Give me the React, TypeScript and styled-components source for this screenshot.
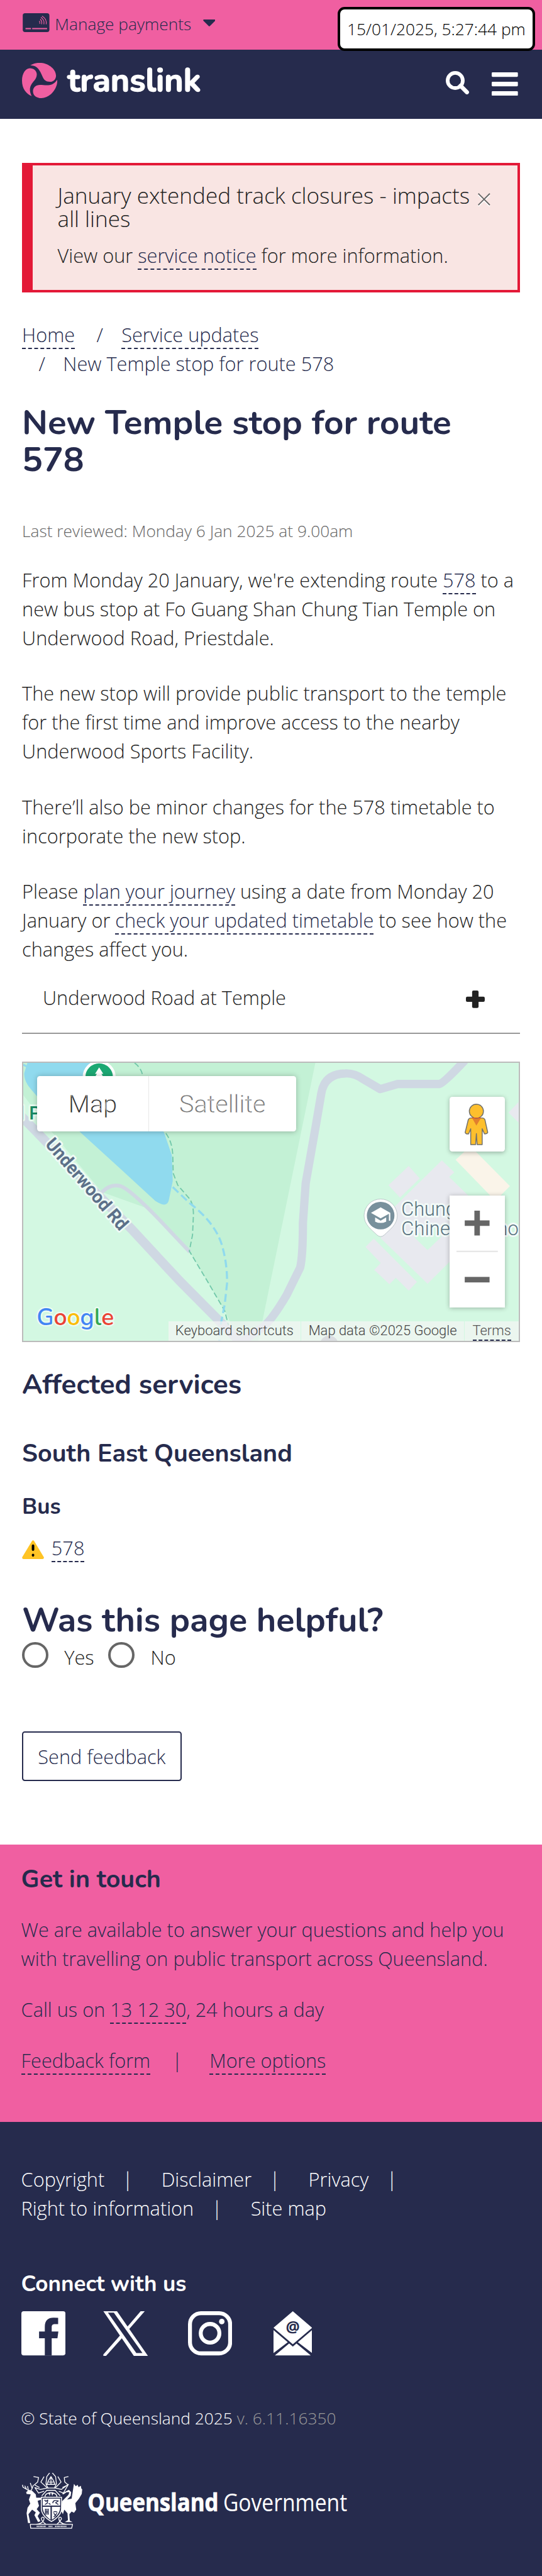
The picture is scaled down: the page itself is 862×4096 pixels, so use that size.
import React from "react";
import styled, { createGlobalStyle } from "styled-components";

/* Sizes are written in design units: the page is 1179 units wide. */
const u = (n: number) => `${(n * 0.73095).toFixed(2)}px`;

const navy = "#262b4d";
const pink = "#f05fa1";
const bodyFont = `"Open Sans", "Noto Sans", sans-serif`;
const headFont = `Nunito, "Open Sans", sans-serif`;
const mapFont = `Roboto, "Liberation Sans", sans-serif`;

const GlobalStyle = createGlobalStyle`
  *, *::before, *::after { box-sizing: border-box; }
  html, body { margin: 0; padding: 0; background: #fff; }
  body {
    font-family: ${bodyFont};
    font-weight: 300;
    font-size: ${u(42)};
    line-height: ${u(63)};
    color: #222;
    overflow: hidden;
  }
  svg { display: block; flex: none; }
  h1, h2, h3, h4, p { margin: 0; }
`;

const Page = styled.div`
  position: relative;
  width: 100%;
  height: 4096px;
  overflow: hidden;
  white-space: nowrap;
`;

const TopBar = styled.div`
  display: flex;
  height: ${u(108)};
  padding: 0 0 ${u(4)} ${u(49)};
  align-items: center;
  background: ${pink};
  color: ${navy};
  font-size: ${u(36)};
`;

const CardIcon = styled.svg`
  width: ${u(58.5)};
  height: ${u(41)};
  margin: 0 ${u(12)} ${u(5)} 0;
`;

const Caret = styled.svg`
  width: ${u(27)};
  height: ${u(15)};
  margin: 0 0 ${u(5)} ${u(25)};
`;

const Timestamp = styled.div`
  position: absolute;
  top: ${u(15)};
  right: ${u(15)};
  width: ${u(430)};
  height: ${u(96)};
  display: flex;
  align-items: center;
  justify-content: center;
  background: #fff;
  border: ${u(6)} solid #000;
  border-radius: ${u(15)};
  color: #000;
  font-size: ${u(36)};
`;

const NavBar = styled.header`
  display: flex;
  align-items: center;
  height: ${u(150)};
  padding: 0 ${u(52)} ${u(15)} ${u(48)};
  background: ${navy};
`;

const Brand = styled.div`
  margin: 0 auto 0 ${u(22)};
  color: #fff;
  font-family: ${headFont};
  font-weight: 700;
  font-size: ${u(71)};
  line-height: ${u(92)};
  -webkit-text-stroke: ${u(2)} #fff;
`;

const NavIcon = styled.svg<{ $w: number; $drop: number; $gap?: number }>`
  width: ${(p) => u(p.$w)};
  height: ${u(51)};
  margin-top: ${(p) => u(p.$drop * 2)};
  margin-left: ${(p) => u(p.$gap ?? 0)};
`;

const Main = styled.main`
  padding: ${u(96)} ${u(48)} ${u(138)};
`;

const Alert = styled.section`
  display: flex;
  justify-content: space-between;
  height: ${u(282)};
  padding: ${u(40)} ${u(59)} 0 ${u(54)};
  background: #f9e5e3;
  border: ${u(6)} solid #e31937;
  border-left-width: ${u(24)};
`;

const AlertTitle = styled.p`
  margin-bottom: ${u(23)};
  font-size: ${u(48)};
  line-height: ${u(51)};
`;

const CloseIcon = styled.svg`
  width: ${u(27)};
  height: ${u(30)};
  margin-top: ${u(20)};
`;

const Link = styled.a`
  color: ${navy};
  border-bottom: ${u(3)} dashed ${navy};
`;

const Crumbs = styled.nav`
  margin-top: ${u(60)};
  color: ${navy};
`;

const Sep = styled.span<{ $before: number; $after: number }>`
  margin-left: ${(p) => u(p.$before)};
  margin-right: ${(p) => u(p.$after)};
`;

const Heading = styled.h2<{ $size: number; $top: number; $bottom?: number; $line?: number; $color?: string }>`
  margin-top: ${(p) => u(p.$top)};
  margin-bottom: ${(p) => u(p.$bottom ?? 0)};
  font-family: ${headFont};
  font-weight: 700;
  font-size: ${(p) => u(p.$size)};
  line-height: ${(p) => u(p.$line ?? 60)};
  color: ${(p) => p.$color ?? navy};
`;

const Reviewed = styled.p`
  margin: ${u(87.2)} 0 ${u(47)};
  font-size: ${u(36)};
  line-height: ${u(54)};
  color: #666;
`;

const Para = styled.p<{ $gap?: number }>`
  margin-bottom: ${(p) => u(p.$gap ?? 57.7)};
`;

const Accordion = styled.div`
  display: flex;
  justify-content: space-between;
  align-items: center;
  padding: ${u(42)} ${u(76)} ${u(45)} ${u(45)};
  border-bottom: ${u(4)} solid #999;
`;

const PlusIcon = styled.svg`
  width: ${u(41)};
  height: ${u(38)};
  margin-top: ${u(9)};
`;

const MapFrame = styled.div`
  position: relative;
  height: ${u(611)};
  margin-top: ${u(60)};
  border: ${u(3)} solid #bbb;
  overflow: hidden;
  font-family: ${mapFont};
`;

const MapArt = styled.svg`
  width: 100%;
  height: 100%;
`;

const MapTypes = styled.div`
  position: absolute;
  top: ${u(30)};
  left: ${u(30)};
  display: flex;
  height: ${u(120)};
  background: #fff;
  border-radius: ${u(6)};
  box-shadow: 0 ${u(1)} ${u(12)} rgba(0, 0, 0, 0.25);
`;

const MapType = styled.button<{ $w: number; $active?: boolean }>`
  width: ${(p) => u(p.$w)};
  padding: 0;
  border: 0;
  border-left: ${(p) => (p.$active ? "0" : `1px solid #e8e8e8`)};
  background: none;
  font-family: ${mapFont};
  font-weight: 300;
  font-size: ${u(54)};
  color: ${(p) => (p.$active ? "#222" : "#707070")};
  -webkit-text-stroke: 0.35px #fff;
`;

const MapControl = styled.div<{ $top: number; $h: number; $r: number }>`
  position: absolute;
  top: ${(p) => u(p.$top)};
  right: ${u(30)};
  width: ${u(120)};
  height: ${(p) => u(p.$h)};
  background: #fff;
  border-radius: ${(p) => u(p.$r)};
  box-shadow: 0 ${u(2)} ${u(10)} rgba(0, 0, 0, 0.28);
  svg { width: 100%; height: 100%; }
`;

const Attribution = styled.div`
  position: absolute;
  right: 0;
  bottom: 0;
  display: flex;
  gap: ${u(2)};
  height: ${u(42)};
  font-size: ${u(30)};
  line-height: ${u(40)};
  font-weight: 300;
  color: #444;
`;

const Credit = styled.span<{ $w: number }>`
  width: ${(p) => u(p.$w)};
  text-align: center;
  background: rgba(245, 245, 245, 0.7);
`;

const TermsLink = styled.a`
  display: inline-block;
  height: ${u(42)};
  border-bottom: ${u(4)} dashed ${navy};
  color: #555;
`;

const Route = styled.div`
  display: flex;
  align-items: center;
  margin-top: ${u(28)};
  gap: ${u(16)};
`;

const WarnIcon = styled.svg`
  width: ${u(48)};
  height: ${u(41)};
  margin-top: ${u(9)};
`;

const Choices = styled.div`
  display: flex;
  align-items: center;
  height: ${u(57)};
  margin: ${u(6)} 0 ${u(138)};
`;

const Radio = styled.span`
  width: ${u(57)};
  height: ${u(57)};
  border: ${u(6)} solid #666;
  border-radius: 50%;
`;

const Choice = styled.span`
  margin: 0 ${u(31)} 0 ${u(35)};
  padding-top: ${u(11)};
`;

const Button = styled.button`
  display: block;
  width: ${u(347)};
  height: ${u(108)};
  padding: 0;
  border: ${u(3)} solid ${navy};
  border-radius: ${u(6)};
  background: #fff;
  color: ${navy};
  font: 300 ${u(42)} ${bodyFont};
`;

const Contact = styled.section`
  height: ${u(603)};
  padding: ${u(46.5)} ${u(46)} 0;
  background: ${pink};
  color: ${navy};
`;

const Footer = styled.footer`
  height: ${u(990)};
  padding: ${u(94)} ${u(46)} 0;
  background: ${navy};
  color: #fff;
`;

const Social = styled.div`
  display: flex;
  align-items: center;
  height: ${u(97)};
  margin-top: ${u(29)};
`;

const SocialIcon = styled.svg<{ $w: number; $gap: number }>`
  width: ${(p) => u(p.$w)};
  height: ${u(97)};
  margin-right: ${(p) => u(p.$gap)};
`;

const Legal = styled.p`
  margin: ${u(110)} 0 ${u(91)};
  font-size: ${u(36)};
  line-height: ${u(54)};
  span { color: #999; }
`;

const Crest = styled.div`
  display: flex;
  gap: ${u(10)};
  padding-left: ${u(2)};
`;

const Swirl = () => (
  <svg width={u(77)} height={u(77)} viewBox="24 36 232 232" fill={pink}>
    <path d="M78 53C100 38 125 34 150 36C203 41 246 80 247 118C247 140 235 160 206 160C180 160 168 148 158 125C142 88 125 50 78 53Z" />
    <path d="M75 71C101 71 121 88 121 112C121 130 112 144 98 160C72 190 70 218 87 254C52 238 24 205 24 152C24 105 48 71 75 71Z" />
    <path d="M255 146C258 182 240 216 215 240C190 262 165 268 140 267C112 263 96 246 96 222C96 197 115 180 142 180C177 180 222 197 255 146Z" />
  </svg>
);

const MapDrawing = () => (
  <MapArt viewBox="0 0 1077 605" preserveAspectRatio="none" fontFamily="Roboto, sans-serif">
    <rect width="1077" height="605" fill="#d3f8e2" />
    <path d="M0 0H635L511 605H470L438 539L361 409L280 320L171 281L62 150L0 70Z" fill="#c3f1d5" />
    <path d="M9 0L2 23C2 45 18 58 32 75L84 114L122 149L212 231L287 300Q314 318 317 296L325 257L323 201L306 151L272 110L175 0Z" fill="#90daee" />
    <path d="M171 281Q190 262 212 268Q232 275 295 340L362 411" fill="none" stroke="#cfd8e3" strokeWidth="8" />
    <path d="M-10 110L62 184L235 361L340 474L470 605" fill="none" stroke="#cfd8e3" strokeWidth="20" />
    <path d="M470 610L520 575Q540 560 573 504L602 445Q608 420 608 348L614 262L637 131L648 66Q655 24 700 23Q720 22 740 36L776 57L814 46L905 46Q914 44 960 -5" fill="none" stroke="#cfd8e3" strokeWidth="18" strokeLinejoin="round" />
    <g fill="none" stroke="#72c8aa" strokeWidth="2.5" strokeDasharray="12 6">
      <path d="M242 0Q260 14 260 34" />
      <path d="M310 153Q324 172 325 200L326 240L336 266L362 296Q370 308 370 330L368 374L361 409L400 474L438 539L446 570" />
    </g>
    <path d="M325 270L362 305Q420 350 433 400Q444 440 443 480L438 525L430 565L426 605M0 4L8 8" fill="none" stroke="#90daee" strokeWidth="4.5" strokeDasharray="17 8" />
    <g fill="#e8e9ef">
      <path d="M838 224L862 251L819 293L794 266Z" />
      <path fillRule="evenodd" d="M910 212L937 238L926 248L1010 330V350L879 480L777 381L809 311ZM849 378L879 407L909 378L894 350Z" />
      <path d="M762 382L856 476L838 495L810 467L796 481L763 450L777 435L744 400Z" />
      <path d="M1055 108L1077 85V130Z" />
    </g>
    <path d="M940 211L959 193H984L1058 268L1036 290H1017Z" fill="#faf4e9" />
    <circle cx="165" cy="31" r="36" fill="#fff" />
    <circle cx="165" cy="31" r="30" fill="#1ca873" />
    <path d="M165 10L174 24H170L178 38H152L160 24H156Z" fill="#fff" />
    <g stroke="#fff" strokeWidth="8" strokeLinejoin="round" paintOrder="stroke">
      <text x="-8" y="123" fontSize="41" fontWeight="500" fill="#188a64" stroke="#e6fbef">l P</text>
      <text transform="translate(46 178) rotate(49)" fontSize="40" fontWeight="700" fill="#5c7089" stroke="#eefaf5" textLength="250" lengthAdjust="spacingAndGlyphs">Underwood Rd</text>
      <g fontSize="42" fill="#56707d" stroke="#f2faf8">
        <text x="822" y="332">Chung Tian</text>
        <text x="822" y="374" textLength="255">Chinese Scho</text>
      </g>
    </g>
    <path d="M777 296A36 36 0 0 1 813 332C813 352 797 362 785 374Q777 381 769 374C757 362 741 352 741 332A36 36 0 0 1 777 296Z" fill="#fff" stroke="#aab5bb" strokeWidth="1" />
    <circle cx="777" cy="332" r="30" fill="#78909c" />
    <path d="M777 314L798 326V343H795V328L777 338L756 326ZM765 336L777 343L789 336V345Q777 351 765 345Z" fill="#fff" />
    <circle cx="665" cy="613" r="20" fill="#9aa3ad" />
    <text x="29" y="570" fontFamily="Nunito, 'Open Sans', sans-serif" fontSize="51" fontWeight="600" stroke="#fff" strokeOpacity=".6" strokeWidth="6" paintOrder="stroke">
      <tspan fill="#4285f4">G</tspan><tspan fill="#ea4335">o</tspan><tspan fill="#fbbc04">o</tspan><tspan fill="#4285f4">g</tspan><tspan fill="#34a853">l</tspan><tspan fill="#ea4335">e</tspan>
    </text>
  </MapArt>
);

const Pegman = () => (
  <svg viewBox="0 0 360 360" fill="#fdbf2d" stroke="#70706c" strokeWidth="6" strokeLinejoin="round">
    <path d="M140 138H212Q226 138 231 150L249 232Q246 242 228 242L213 208V312H180L175 240L170 312H138V208L124 242Q104 244 102 232L122 150Q127 138 140 138Z" />
    <path d="M148 140H204L175 188Z" fill="#e17f2e" stroke="none" />
    <circle cx="175" cy="94" r="46" />
    <path d="M144 138H206" stroke="#d9542c" strokeWidth="5" />
  </svg>
);

const CoatOfArms = () => (
  <svg width={u(133)} height={u(121)} viewBox="0 0 133 121" fill="#fff" stroke="#fff" strokeLinejoin="round">
    <g fill="none" strokeWidth="1.8">
      <path d="M18 41L10 36L2 31L1 26M10 36L6 28M18 41L22 34L18 22M22 34L25 26M14 38L12 29" />
      <path d="M25 8L36 10L34 20L27 26L38 32M48 8L41 20L50 28L55 33L40 36L28 32L36 44L48 40M101 8L92 10L93 20L100 26L88 32M78 8L85 20L77 28L72 33L86 36L101 25L90 44L80 40" />
      <path d="M60 0L54 8L52 24L57 34M66 0L73 8L75 24L70 34M57 18L63 8L69 18L72 25H54ZM63 10V26M57 20H69" />
      <path d="M53 38H73M56 33H70M54 38L43 50M72 38L83 50M50 52C50 40 76 40 76 52M60 42V49M66 42V49M57 45H62M64 45H69" />
    </g>
    <path strokeWidth="0" d="M9 42L15 37L22 39L30 47L31 54L41 54L42 58L34 61L37 72L32 79L39 87L34 94L40 105L35 107L27 92L30 86L22 80L14 90L18 109L13 109L10 88L12 76L18 67L15 58L19 47L10 46Z" />
    <path strokeWidth="0" d="M113 24L117 29L121 26L123 31L128 28L129 34L131 36L130 46L124 56L116 66L118 80L113 87L108 84L103 90L104 104L110 107H93L100 103L99 88L92 80L89 90L85 82L87 62L101 48L103 42L97 42L90 47L87 45L96 40L102 37L107 42L106 50L98 58L108 56Z" />
    <path d="M42 53H86V75C87 89 78 98 64 106C50 98 41 89 42 75Z" strokeWidth="2" fill="#262b4d" />
    <path d="M45 56H83V71H45ZM45 74H62V102C52 95 45 86 45 74ZM65 74H83C83 86 76 95 65 102Z" strokeWidth="0" />
    <g fill="none" stroke="#262b4d" strokeWidth="2">
      <path d="M49 59L52 62L56 59L55 66L50 69M58 66L62 69M67 66C67 60 72 59 79 61L73 65L79 69M51 78V91M54 78V91M57 78V91M50 85H58M69 88L76 96M76 88L69 96M68 86Q72 82 77 86" />
    </g>
    <path fill="none" strokeWidth="1.8" d="M18 112H110L108 120.5H19ZM30 112Q48 110 48 98Q43 94 42 100Q44 106 52 112M97 112Q80 110 80 98Q85 94 86 100Q83 106 76 112" />
    <path fill="none" strokeWidth="3" strokeDasharray="2 1.2" d="M32 116.5H52M58 116.5H66M72 116.5H97" />
  </svg>
);

const GovWordmark = () => (
  <svg width={u(620)} height={u(121)} viewBox="0 0 620 121" fill="#fff" fontFamily="'Open Sans', sans-serif" fontSize="53">
    <text x="-1" y="84" fontWeight="700" textLength="285" lengthAdjust="spacingAndGlyphs" stroke="#fff" strokeWidth="1">Queensland</text>
    <text x="294" y="84" fontWeight="400" textLength="270" lengthAdjust="spacingAndGlyphs">Government</text>
  </svg>
);

export default function App() {
  return (
    <Page>
      <GlobalStyle />
      <TopBar>
        <CardIcon viewBox="0 0 58 41">
          <rect width="58" height="41" rx="5" fill={navy} />
          <path d="M6 33.5H18M20.500 33.500H53" stroke={pink} strokeWidth="2.600" />
          <path d="M36 17Q38 20 37 23M38 13Q43 18 41 24M39.500 9Q48 15 46 24M42 6Q53 13 51 24" fill="none" stroke={pink} strokeWidth="1.600" />
        </CardIcon>
        Manage payments
        <Caret viewBox="0 0 27 15">
          <path d="M1.500 0H25.500Q28 1 26 3L15 14Q13.500 15.500 12 14L1 3Q-1 1 1.500 0Z" fill={navy} />
        </Caret>
      </TopBar>
      <NavBar>
        <Swirl />
        <Brand>translink</Brand>
        <NavIcon $w={51} $drop={4} viewBox="0 0 51 51">
          <circle cx="20.500" cy="20.500" r="16.500" fill="none" stroke="#fff" strokeWidth="8" />
          <path d="M32 32L46 46" stroke="#fff" strokeWidth="9" strokeLinecap="round" />
        </NavIcon>
        <NavIcon $w={57} $drop={7.5} $gap={49} viewBox="0 0 57 51" fill="#fff">
          <rect width="57" height="10" rx="2" />
          <rect y="20.500" width="57" height="10" rx="2" />
          <rect y="41" width="57" height="10" rx="2" />
        </NavIcon>
      </NavBar>
      <Timestamp>15/01/2025, 5:27:44 pm</Timestamp>

      <Main>
        <Alert>
          <div>
            <AlertTitle>
              January extended track closures - impacts
              <br />
              all lines
            </AlertTitle>
            <p>
              View our <Link>service notice</Link> for more information.
            </p>
          </div>
          <CloseIcon viewBox="0 0 27 30" fill="none">
            <path d="M1 4L26 29M26 4L1 29" stroke="#fff" strokeWidth="2.500" />
            <path d="M1 1L26 26M26 1L1 26" stroke="#666" strokeWidth="2.500" />
          </CloseIcon>
        </Alert>

        <Crumbs>
          <Link>Home</Link>
          <Sep $before={47} $after={40}>/</Sep>
          <Link>Service updates</Link>
          <br />
          <Sep $before={36} $after={39}>/</Sep>
          New Temple stop for route 578
        </Crumbs>

        <Heading as="h1" $size={75} $top={57.8} $line={81}>
          New Temple stop for route
          <br />
          578
        </Heading>
        <Reviewed>Last reviewed: Monday 6 Jan 2025 at 9.00am</Reviewed>

        <Para>
          From Monday 20 January, we're extending route <Link>578</Link> to a
          <br />
          new bus stop at Fo Guang Shan Chung Tian Temple on
          <br />
          Underwood Road, Priestdale.
        </Para>
        <Para>
          The new stop will provide public transport to the temple
          <br />
          for the first time and improve access to the nearby
          <br />
          Underwood Sports Facility.
        </Para>
        <Para>
          There’ll also be minor changes for the 578 timetable to
          <br />
          incorporate the new stop.
        </Para>
        <Para $gap={0}>
          Please <Link>plan your journey</Link> using a date from Monday 20
          <br />
          January or <Link>check your updated timetable</Link> to see how the
          <br />
          changes affect you.
        </Para>

        <Accordion>
          Underwood Road at Temple
          <PlusIcon viewBox="0 0 41 38" fill="#222">
            <rect x="13.500" width="14" height="38" rx="3" />
            <rect y="13.500" width="41" height="11" rx="3" />
          </PlusIcon>
        </Accordion>

        <MapFrame>
          <MapDrawing />
          <MapTypes>
            <MapType $w={242} $active>Map</MapType>
            <MapType $w={321}>Satellite</MapType>
          </MapTypes>
          <MapControl $top={74} $h={120} $r={6}>
            <Pegman />
          </MapControl>
          <MapControl $top={290} $h={243} $r={0}>
            <svg viewBox="0 0 120 243" fill="#666">
              <path d="M33 54H54V33H66V54H87V66H66V87H54V66H33Z" />
              <rect x="15" y="120" width="90" height="3" fill="#e6e6e6" />
              <rect x="33" y="177" width="54" height="12" />
            </svg>
          </MapControl>
          <Attribution>
            <Credit $w={287}>Keyboard shortcuts</Credit>
            <Credit $w={354}>Map data ©2025 Google</Credit>
            <Credit $w={117}>
              <TermsLink>Terms</TermsLink>
            </Credit>
          </Attribution>
        </MapFrame>

        <Heading $size={60} $top={62.7}>Affected services</Heading>
        <Heading as="h3" $size={54} $top={90.9}>South East Queensland</Heading>
        <Heading as="h4" $size={48} $top={54}>Bus</Heading>
        <Route>
          <WarnIcon viewBox="0 0 48 41">
            <path d="M21.500 2Q24 -1.500 26.500 2L47.500 37Q48.500 40.500 45 41H3Q-0.500 40.500 0.500 37Z" fill="#ffc425" />
            <path d="M24 12V20.500M24 32V33" stroke="#000" strokeWidth="5.500" strokeLinecap="round" />
          </WarnIcon>
          <p>
            <Link>578</Link>
          </p>
        </Route>

        <Heading $size={73.7} $top={86.4} $line={81}>Was this page helpful?</Heading>
        <Choices>
          <Radio />
          <Choice>Yes</Choice>
          <Radio />
          <Choice>No</Choice>
        </Choices>
        <Button>Send feedback</Button>
      </Main>

      <Contact>
        <Heading $size={54} $top={0} $bottom={46.5}>Get in touch</Heading>
        <Para $gap={48}>
          We are available to answer your questions and help you
          <br />
          with travelling on public transport across Queensland.
        </Para>
        <Para $gap={48}>
          Call us on <Link>13 12 30</Link>, 24 hours a day
        </Para>
        <Para $gap={0}>
          <Link>Feedback form</Link>
          <Sep $before={47} $after={59}>|</Sep>
          <Link>More options</Link>
        </Para>
      </Contact>

      <Footer>
        <div>
          Copyright<Sep $before={39} $after={62}>|</Sep>
          Disclaimer<Sep $before={39} $after={62}>|</Sep>
          Privacy<Sep $before={39} $after={0}>|</Sep>
          <br />
          Right to information<Sep $before={39} $after={62}>|</Sep>
          Site map
        </div>
        <Heading $size={48} $top={103.500} $color="#fff">Connect with us</Heading>
        <Social>
          <SocialIcon $w={96} $gap={83} viewBox="0 0 96 97">
            <rect width="96" height="96" rx="5" fill="#fff" />
            <path d="M51 96.500V59H38.500V44H51V34C51 20 58 14 70 14L80 14.500V28H73C67 28 66 31 66 35V44H80.500L78.500 59H66V96.500Z" fill={navy} />
          </SocialIcon>
          <SocialIcon $w={98} $gap={86} viewBox="0 0 98 98" fill="#fff">
            <path fillRule="evenodd" d="M0 0H30L98 98H67ZM10 3L72.500 92H86L23 3Z" />
            <path d="M82 0H91L56 40L53 34ZM0 98H6L41 59L37 53L0 95Z" />
          </SocialIcon>
          <SocialIcon $w={96} $gap={90} viewBox="0 0 96 97" fill="none" stroke="#fff">
            <rect x="4.300" y="4.300" width="87.400" height="87.400" rx="24" strokeWidth="8.600" />
            <circle cx="48" cy="48" r="20.300" strokeWidth="8.600" />
            <circle cx="73.500" cy="22.500" r="6" fill="#fff" stroke="none" />
          </SocialIcon>
          <SocialIcon $w={84} $gap={0} viewBox="0 0 84 97" fill="#fff">
            <path d="M42 0L84 36L42 72L0 36ZM0 41L31 67.500L0 91ZM84 41L53 67.500L84 91ZM3 96L34 70L42 77L50 70L81 96Z" />
            <text x="42" y="47" textAnchor="middle" fontFamily="'Open Sans', sans-serif" fontWeight="700" fontSize="34" fill={navy}>@</text>
          </SocialIcon>
        </Social>
        <Legal>
          © State of Queensland 2025 <span>v. 6.11.16350</span>
        </Legal>
        <Crest>
          <CoatOfArms />
          <GovWordmark />
        </Crest>
      </Footer>
    </Page>
  );
}
